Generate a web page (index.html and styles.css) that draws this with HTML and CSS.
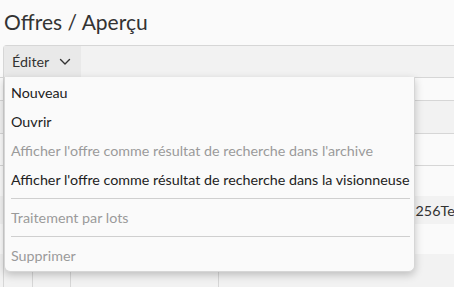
FILE: index.html
```html
<!DOCTYPE html>
<html lang="fr">
<head>
<meta charset="utf-8">
<link rel="stylesheet" href="styles.css">
</head>
<body>
<h1 class="title">Offres / Aperçu</h1>
<div class="toolbar">
  <div class="btn-edit">Éditer
    <svg class="chev" width="12" height="8" viewBox="0 0 12 8"><path d="M1.5 1.5 L6 6 L10.5 1.5" fill="none" stroke="#333" stroke-width="1.4" stroke-linecap="round" stroke-linejoin="round"/></svg>
  </div>
</div>
<div class="content">
  <div class="grid">
    <div class="row r1"><span class="c c1"></span><span class="c c2"></span><span class="c c3"></span><span class="c c4"></span></div>
    <div class="row r2 alt"><span class="c c1"></span><span class="c c2"></span><span class="c c3"></span><span class="c c4"></span></div>
    <div class="row r3"><span class="c c1"></span><span class="c c2"></span><span class="c c3"></span><span class="c c4"></span></div>
    <div class="row r4 noline"><span class="c c1"></span><span class="c c2"></span><span class="c c3"></span><span class="c c4"></span></div>
    <div class="row r5 alt noline"><span class="c c1"></span><span class="c c2"></span><span class="c c3"></span><span class="c c4 txt">Offre_3256Test</span></div>
    <div class="row r6 noline"><span class="c c1"></span><span class="c c2"></span><span class="c c3"></span><span class="c c4"></span></div>
    <div class="row r7 alt2 noline"><span class="c c1"><span class="dots"></span></span><span class="c c2"></span><span class="c c3"></span><span class="c c4"></span></div>
  </div>
  <div class="menu">
    <div class="item">Nouveau</div>
    <div class="item">Ouvrir</div>
    <div class="item dis">Afficher l'offre comme résultat de recherche dans l'archive</div>
    <div class="item">Afficher l'offre comme résultat de recherche dans la visionneuse</div>
    <div class="sep"></div>
    <div class="item dis">Traitement par lots</div>
    <div class="sep"></div>
    <div class="item dis">Supprimer</div>
  </div>
</div>
</body>
</html>
```
FILE: styles.css
```css
html, body {
  margin: 0;
  padding: 0;
  background: #fafafa;
  font-family: Lato, "Open Sans", sans-serif;
  color: #333;
  overflow: hidden;
}
.title {
  margin: 0;
  height: 45px;
  box-sizing: border-box;
  padding: 8px 0 0 4px;
  font-size: 21px;
  font-weight: 400;
  line-height: 28px;
  color: #333;
}
.toolbar {
  margin-left: 3px;
  height: 32px;
  box-sizing: border-box;
  border-top: 1px solid #d6d6d6;
  border-left: 1px solid #d6d6d6;
  border-radius: 4px 0 0 0;
  background: #f2f2f2;
  display: flex;
}
.btn-edit {
  width: 77px;
  box-sizing: border-box;
  padding-left: 8px;
  background: #e9e9e9;
  display: flex;
  align-items: center;
  gap: 10px;
  font-size: 14.3px;
}
.content {
  position: relative;
}
.grid {
  border-top: 1px solid #d6d6d6;
}
.row {
  display: flex;
  border-bottom: 1px solid #d6d6d6;
  background: #fafafa;
}
.row.noline { border-bottom: none; }
.row.alt, .row.alt2 { background: #f2f2f2; }
.r1 { height: 22px; }
.r2 { height: 32px; }
.r3 { height: 31px; }
.r4 { height: 30px; }
.r5 { height: 28px; }
.r6 { height: 30px; }
.r7 { height: 40px; }
.c {
  box-sizing: border-box;
  border-left: 1px solid #d6d6d6;
  height: 100%;
  display: flex;
  align-items: center;
  font-size: 14.3px;
}
.c1 { margin-left: 3px; width: 29px; position: relative; }
.c2 { width: 38px; }
.c3 { width: 148px; }
.c4 { flex: 1; justify-content: flex-end; overflow: hidden; white-space: nowrap; }
.txt { margin-right: -12px; }
.dots {
  position: absolute;
  left: 9px;
  top: 2px;
  width: 13px;
  height: 2px;
  border-top: 1px dotted #3b6fc4;
}
.menu {
  position: absolute;
  top: 0;
  left: 4px;
  width: 411px;
  height: 195px;
  box-sizing: border-box;
  background: #fafafa;
  border: 1px solid #d6d6d6;
  border-top: none;
  border-radius: 0 0 6px 6px;
  box-shadow: 0 3px 8px rgba(0,0,0,0.22);
  padding-top: 1px;
}
.item {
  height: 29px;
  line-height: 29px;
  padding-left: 6px;
  font-size: 14.3px;
  color: #222;
  white-space: nowrap;
}
.item.dis { color: #9a9a9a; }
.sep {
  height: 1px;
  background: #cfcfcf;
  margin: 4px 4px 4px 6px;
}
```
